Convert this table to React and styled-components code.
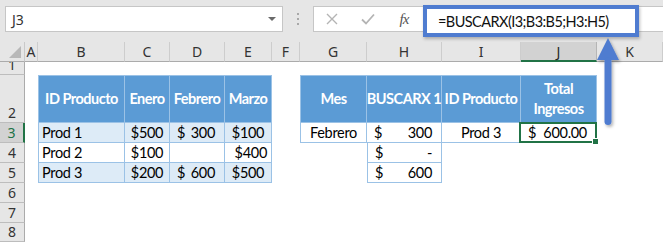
import React from 'react';
import styled, { createGlobalStyle, css } from 'styled-components';

const Global = createGlobalStyle`
  html, body { margin: 0; padding: 0; background: #ffffff; }
  body {
    width: 663px;
    height: 242px;
    overflow: hidden;
    font-family: Lato, "Liberation Sans", sans-serif;
  }
`;

const GREEN = '#217346';
const LINE = '#9bc2e6';

const COLUMNS = [
  { id: 'A', w: 13 },
  { id: 'B', w: 87 },
  { id: 'C', w: 45 },
  { id: 'D', w: 55 },
  { id: 'E', w: 47 },
  { id: 'F', w: 28 },
  { id: 'G', w: 67 },
  { id: 'H', w: 75 },
  { id: 'I', w: 79 },
  { id: 'J', w: 76 },
  { id: 'K', w: 66 },
];

const ROW_HEIGHTS = [13, 48, 20, 20, 20, 20, 20, 19];

// Cell contents, keyed by address
const head = (text) => ({ fill: 'head', text, align: 'center' });
const CELLS = {
  B2: head(['ID Producto']),
  C2: head(['Enero']),
  D2: head(['Febrero']),
  E2: head(['Marzo']),
  G2: head(['Mes']),
  H2: head(['BUSCARX 1']),
  I2: head(['ID Producto']),
  J2: head(['Total', 'Ingresos']),

  B3: { fill: 'band', text: 'Prod 1', align: 'left' },
  C3: { fill: 'band', text: '$500', align: 'center' },
  D3: { fill: 'band', acct: ['$', '300'] },
  E3: { fill: 'band', text: '$100', align: 'center' },
  G3: { fill: 'white', text: 'Febrero', align: 'center' },
  H3: { fill: 'white', acct: ['$', '300'] },
  I3: { fill: 'white', text: 'Prod 3', align: 'center' },
  J3: { fill: 'white', acct: ['$', '600.00'], selected: true },

  B4: { fill: 'white', text: 'Prod 2', align: 'left' },
  C4: { fill: 'white', text: '$100', align: 'center' },
  D4: { fill: 'white' },
  E4: { fill: 'white', text: '$400', align: 'right' },
  H4: { fill: 'white', acct: ['$', '-'] },

  B5: { fill: 'band', text: 'Prod 3', align: 'left' },
  C5: { fill: 'band', text: '$200', align: 'center' },
  D5: { fill: 'band', acct: ['$', '600'] },
  E5: { fill: 'band', text: '$500', align: 'center' },
  H5: { fill: 'white', acct: ['$', '600'] },
};

// Cells that start a table edge on the top or left side
const TOP_EDGE = new Set(['B2', 'C2', 'D2', 'E2', 'G2', 'H2', 'I2', 'J2']);
const LEFT_EDGE = new Set(['B2', 'B3', 'B4', 'B5', 'G2', 'G3', 'H4', 'H5']);

/* ---------- formula bar ---------- */

const Toolbar = styled.div`
  height: 42px;
  background: #e6e6e6;
  display: flex;
  align-items: flex-start;
  padding: 6px 0 0 5px;
  box-sizing: border-box;
`;

const NameBox = styled.div`
  width: 278px;
  height: 26px;
  box-sizing: border-box;
  background: #fff;
  border: 1px solid #c6c6c6;
  display: flex;
  align-items: center;
  justify-content: space-between;
  padding: 0 6px 0 6px;
  font-family: "Noto Sans", "Open Sans", sans-serif;
  font-size: 14px;
  color: #333;
`;

const Caret = styled.span`
  width: 0;
  height: 0;
  border-left: 4px solid transparent;
  border-right: 4px solid transparent;
  border-top: 4px solid #6a6a6a;
`;

const Grip = styled.div`
  width: 30px;
  height: 26px;
  display: flex;
  flex-direction: column;
  align-items: center;
  justify-content: center;
  gap: 3px;
  & > i {
    width: 2px;
    height: 2px;
    background: #a8a8a8;
  }
`;

const FormulaBox = styled.div`
  position: relative;
  flex: 1;
  height: 26px;
  box-sizing: border-box;
  background: #fff;
  border: 1px solid #c6c6c6;
  border-right: none;
  display: flex;
  align-items: center;
`;

const IconSlot = styled.span`
  width: 36px;
  display: flex;
  justify-content: center;
  align-items: center;
`;

const FxLabel = styled.span`
  font-family: "Liberation Serif", "DejaVu Serif", serif;
  font-style: italic;
  font-size: 15px;
  color: #555;
  letter-spacing: -1px;
`;

const Callout = styled.div`
  position: absolute;
  left: 109px;
  top: -2px;
  width: 216px;
  height: 32px;
  box-sizing: border-box;
  border: 4px solid #4f7cd0;
  background: #fff;
  box-shadow: 1px 2px 3px rgba(0, 0, 0, 0.25);
  display: flex;
  align-items: center;
  padding-left: 11px;
  font-size: 14.5px;
  letter-spacing: -0.55px;
  color: #111;
  white-space: nowrap;
`;

const Pointer = styled.svg`
  position: absolute;
  left: 594px;
  top: 37px;
  overflow: visible;
`;

/* ---------- sheet ---------- */

const Sheet = styled.div`
  display: grid;
  grid-template-columns: 25px ${COLUMNS.map((c) => c.w + 'px').join(' ')};
  grid-template-rows: 20px ${ROW_HEIGHTS.map((h) => h + 'px').join(' ')};
`;

const Corner = styled.div`
  position: relative;
  background: #e6e6e6;
  border-right: 1px solid #c9c9c9;
  border-bottom: 1px solid #ababab;
  box-sizing: border-box;
  &::after {
    content: '';
    position: absolute;
    right: 3px;
    bottom: 3px;
    width: 0;
    height: 0;
    border-left: 12px solid transparent;
    border-bottom: 12px solid #b8b8b8;
  }
`;

const ColHead = styled.div`
  box-sizing: border-box;
  background: ${(p) => (p.$active ? '#d2d2d2' : '#e6e6e6')};
  border-right: 1px solid ${(p) => (p.$active ? '#b5b5b5' : '#cdcdcd')};
  border-bottom: ${(p) => (p.$active ? `2px solid ${GREEN}` : '1px solid #ababab')};
  display: flex;
  align-items: center;
  justify-content: center;
  font-family: "Noto Sans", "Open Sans", sans-serif;
  font-size: 14px;
  color: ${(p) => (p.$active ? '#262626' : '#333')};
  padding-top: ${(p) => (p.$active ? '1px' : '0')};
`;

const RowHead = styled.div`
  box-sizing: border-box;
  background: ${(p) => (p.$active ? '#d2d2d2' : '#e6e6e6')};
  border-right: ${(p) => (p.$active ? `2px solid ${GREEN}` : '1px solid #ababab')};
  border-bottom: 1px solid #bdbdbd;
  display: flex;
  align-items: flex-end;
  justify-content: center;
  padding-bottom: 1px;
  font-family: "Noto Sans", "Open Sans", sans-serif;
  font-size: 14px;
  line-height: 17px;
  color: ${(p) => (p.$active ? GREEN : '#333')};
`;

const fills = {
  head: css`
    background: #5b9bd5;
    color: #fff;
    font-weight: 700;
    letter-spacing: -0.5px;
  `,
  band: css`
    background: #ddebf7;
    color: #000;
  `,
  white: css`
    background: #fff;
    color: #000;
  `,
};

const Cell = styled.div`
  position: relative;
  box-sizing: border-box;
  min-width: 0;
  display: flex;
  align-items: center;
  font-size: 14.5px;
  letter-spacing: -0.3px;
  line-height: 20px;
  white-space: nowrap;
  ${(p) => p.$fill && fills[p.$fill]}
  ${(p) =>
    p.$fill &&
    css`
      border-right: 1px solid ${LINE};
      border-bottom: 1px solid ${LINE};
      ${p.$top && `border-top: 1px solid ${LINE};`}
      ${p.$left && `border-left: 1px solid ${LINE};`}
    `}
  justify-content: ${(p) =>
    p.$align === 'center' ? 'center' : p.$align === 'right' ? 'flex-end' : 'flex-start'};
  padding: 0 ${(p) => (p.$align === 'right' ? '4px' : '3px')};
  ${(p) =>
    p.$fill === 'head' &&
    css`
      flex-direction: column;
      padding: 0;
      overflow: visible;
    `}
  ${(p) =>
    p.$acct &&
    css`
      justify-content: space-between;
      padding: 0 9px 0 7px;
    `}
`;

const Selection = styled.div`
  position: absolute;
  inset: -1px -1px -1px -2px;
  border: 2px solid ${GREEN};
  pointer-events: none;
  &::after {
    content: '';
    position: absolute;
    right: -4px;
    bottom: -4px;
    width: 5px;
    height: 5px;
    background: ${GREEN};
    border: 1px solid #fff;
  }
`;

const HeadLine = styled.span`
  display: block;
  text-align: center;
`;

function SheetCell({ addr }) {
  const c = CELLS[addr];
  if (!c) return <Cell />;
  return (
    <Cell
      $fill={c.fill}
      $align={c.align}
      $acct={!!c.acct}
      $top={TOP_EDGE.has(addr)}
      $left={LEFT_EDGE.has(addr)}
    >
      {c.acct ? (
        <>
          <span>{c.acct[0]}</span>
          <span>{c.acct[1]}</span>
        </>
      ) : c.fill === 'head' ? (
        c.text.map((line) => <HeadLine key={line}>{line}</HeadLine>)
      ) : (
        c.text
      )}
      {c.selected && <Selection />}
    </Cell>
  );
}

const Page = styled.div`
  position: relative;
  width: 663px;
  height: 242px;
  overflow: hidden;
`;

export default function App() {
  return (
    <Page>
      <Global />
      <Toolbar>
        <NameBox>
          <span>J3</span>
          <Caret />
        </NameBox>
        <Grip>
          <i />
          <i />
          <i />
        </Grip>
        <FormulaBox>
          <IconSlot>
            <svg width="12" height="12" viewBox="0 0 12 12">
              <path d="M1 1 L11 11 M11 1 L1 11" stroke="#b4b4b4" strokeWidth="1.4" fill="none" />
            </svg>
          </IconSlot>
          <IconSlot>
            <svg width="14" height="12" viewBox="0 0 14 12">
              <path d="M1 6.5 L5 10.5 L13 1.5" stroke="#b4b4b4" strokeWidth="1.8" fill="none" />
            </svg>
          </IconSlot>
          <IconSlot>
            <FxLabel>fx</FxLabel>
          </IconSlot>
          <Callout>=BUSCARX(I3;B3:B5;H3:H5)</Callout>
        </FormulaBox>
      </Toolbar>
      <Sheet>
        <Corner />
        {COLUMNS.map((c) => (
          <ColHead key={c.id} $active={c.id === 'J'}>
            {c.id}
          </ColHead>
        ))}
        {ROW_HEIGHTS.map((_, i) => {
          const r = i + 1;
          return (
            <React.Fragment key={r}>
              <RowHead $active={r === 3}>{r}</RowHead>
              {COLUMNS.map((c) => (
                <SheetCell key={c.id + r} addr={c.id + r} />
              ))}
            </React.Fragment>
          );
        })}
      </Sheet>
      <Pointer width="28" height="92" viewBox="0 0 28 92">
        <defs>
          <filter id="arrowShade" x="-50%" y="-20%" width="200%" height="140%">
            <feDropShadow dx="1.5" dy="2" stdDeviation="1.5" floodColor="#000" floodOpacity="0.3" />
          </filter>
        </defs>
        <g filter="url(#arrowShade)" fill="#4f7cd0">
          <path d="M14 1 L25 23 L3 23 Z" />
          <rect x="10.5" y="20" width="7" height="68" rx="3.5" />
        </g>
      </Pointer>
    </Page>
  );
}
